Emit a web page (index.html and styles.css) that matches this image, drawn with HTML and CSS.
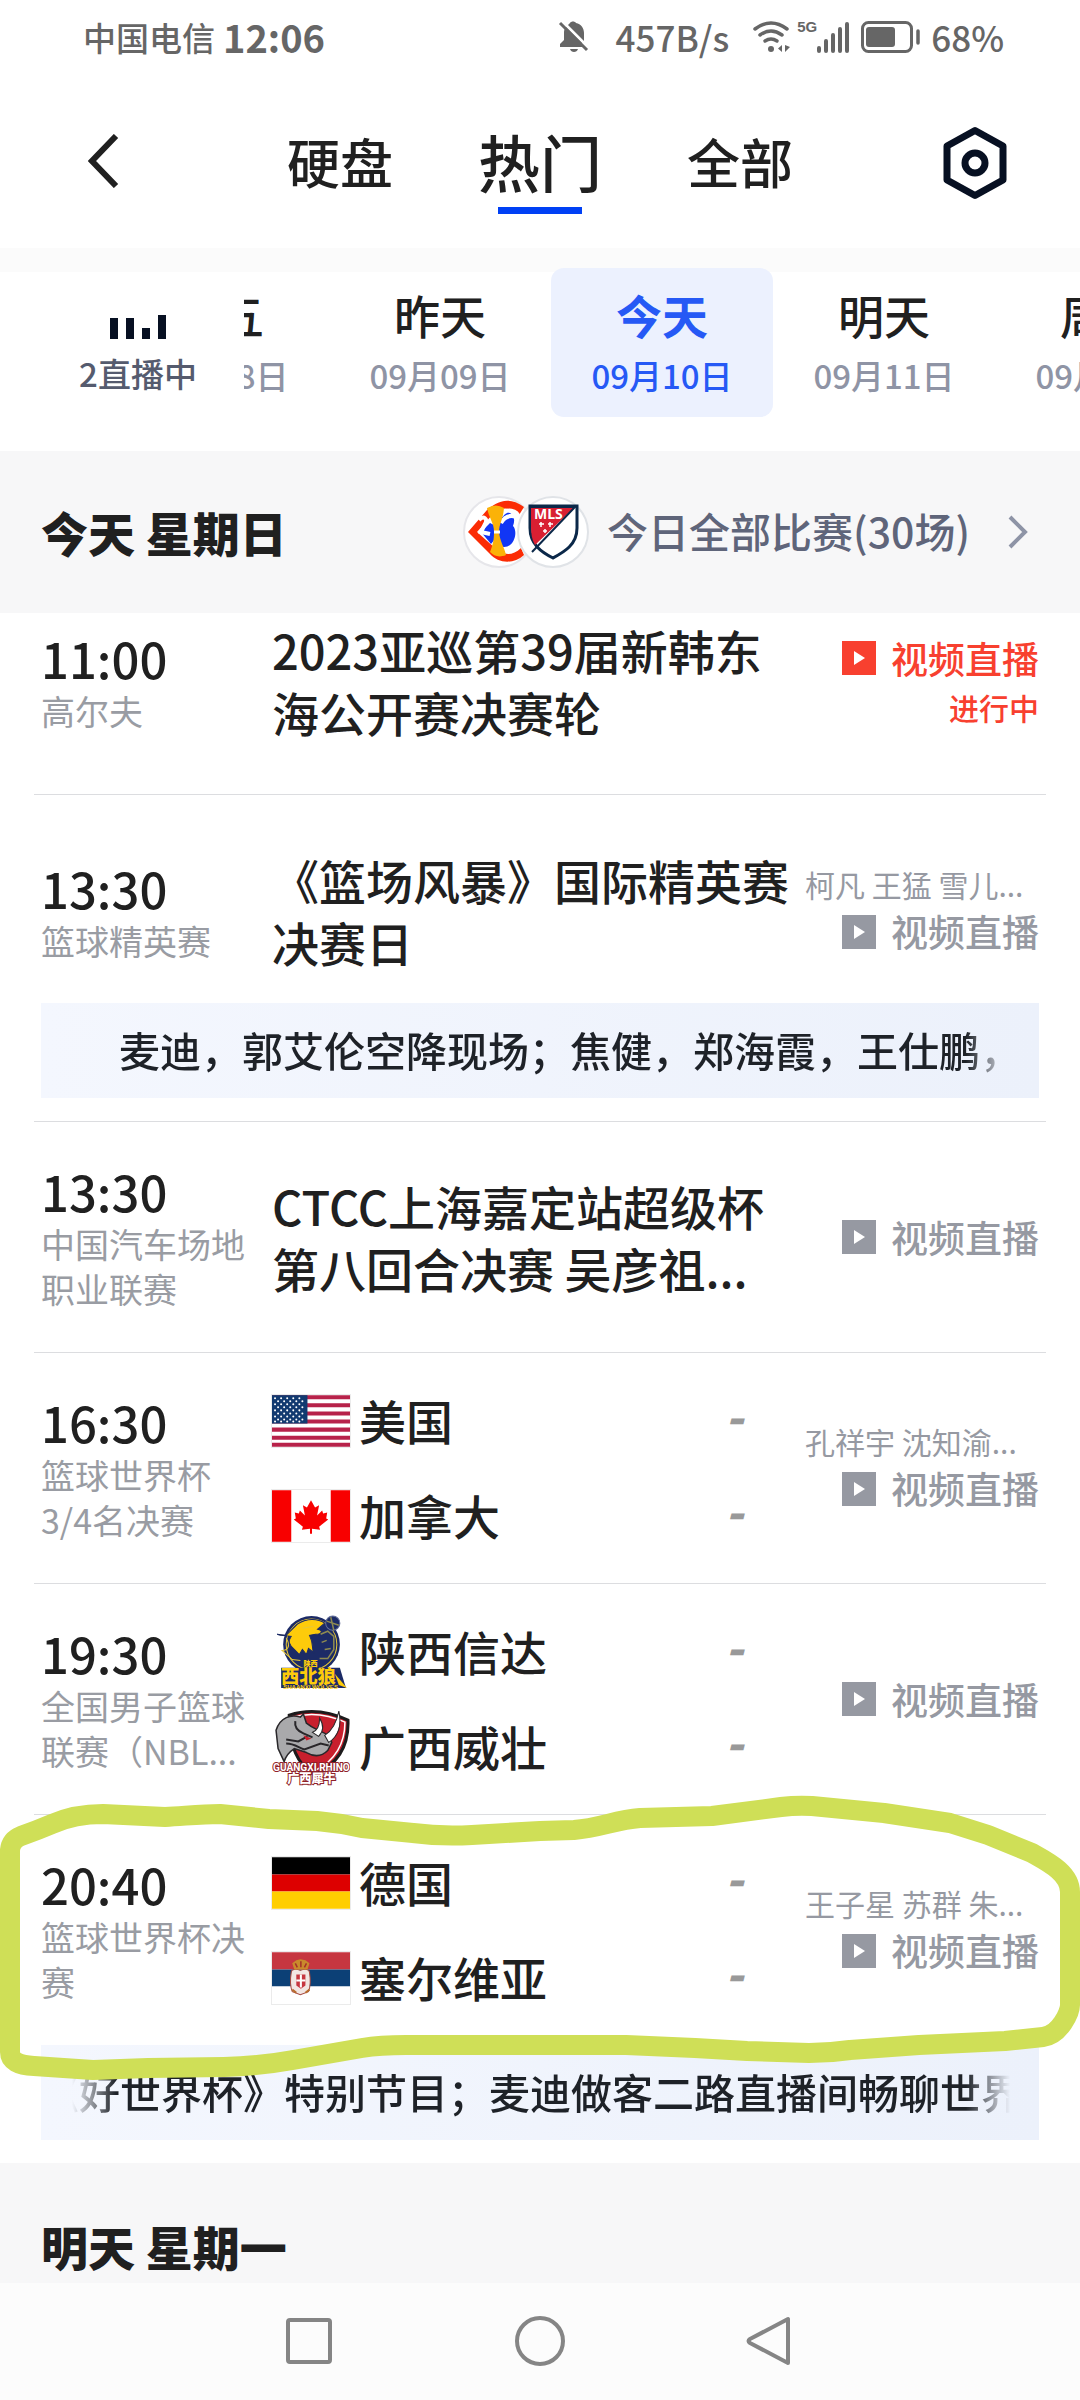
FILE: index.html
```html
<!DOCTYPE html>
<html lang="zh-CN">
<head>
<meta charset="utf-8">
<meta name="viewport" content="width=device-width, initial-scale=1">
<title>热门赛程</title>
<link rel="stylesheet" href="styles.css">
</head>
<body>
<svg class="defs" aria-hidden="true">
  <symbol id="play" viewBox="0 0 34 34"><path d="M0 0h34v34H0z" fill="currentColor"/><path d="M12 10v14l11-7z" fill="#fff"/></symbol>
</svg>

<div class="status">
  <div class="status-left"><span class="carrier">中国电信</span><span class="clock">12:06</span></div>
  <div class="status-right">
    <svg class="bell" width="32" height="34" viewBox="0 0 32 34"><path d="M2 27v-3l4-4v-8c0-2 1-4 2-5L24 23v4zM10 5l2-2c1-2 5-2 6 0 5 1 8 5 8 10v8zM12 29h8c-1 4-7 4-8 0z" fill="#666"/><path d="M2 3l27 27" stroke="#666" stroke-width="3"/></svg>
    <span class="speed">457B/s</span>
    <svg class="wifi" width="38" height="32" viewBox="0 0 38 32"><g fill="none" stroke="#666" stroke-width="3.5" stroke-linecap="round"><path d="M2 8q16-12 32 0"/><path d="M7 14q11-8 22 0"/><path d="M12 20q6-4 12 0"/></g><circle cx="18" cy="28" r="3" fill="#666"/><path d="M29 24v7l-4-3.500zM32 24v7l5-5z" fill="#666"/></svg>
    <span class="net">5G</span>
    <svg width="32" height="32" viewBox="0 0 32 32"><path d="M2 27v3M9 20v10M16 14v16M23 8v22M30 3v27" stroke="#666" stroke-width="4" stroke-linecap="round"/></svg>
    <svg class="battery" width="60" height="32" viewBox="0 0 60 32"><rect x="1.500" y="1.500" width="49" height="29" rx="6" fill="none" stroke="#666" stroke-width="3"/><rect x="5" y="6" width="29" height="20" rx="3" fill="#666"/><path d="M57 10v12" stroke="#666" stroke-width="3.500" stroke-linecap="round"/></svg>
    <span class="percent">68%</span>
  </div>
</div>

<header class="topbar">
  <button class="icon-btn back" aria-label="返回"><svg width="32" height="54" viewBox="0 0 32 54"><path d="M28 2L4 27l24 25" fill="none" stroke="#202020" stroke-width="6"/></svg></button>
  <nav class="tabs">
    <a href="#" class="tab">硬盘</a>
    <a href="#" class="tab active">热门</a>
    <a href="#" class="tab">全部</a>
  </nav>
  <button class="icon-btn settings" aria-label="设置"><svg width="66" height="74" viewBox="0 0 66 74"><path d="M33 4.500L61 20v34L33 69.500 5 54V20z" fill="none" stroke="#071022" stroke-width="7" stroke-linejoin="round"/><circle cx="33" cy="37" r="10" fill="none" stroke="#071022" stroke-width="7"/></svg></button>
</header>

<div class="datebar">
  <button class="live-count">
    <svg width="56" height="24" viewBox="0 0 56 24"><path d="M0 3h8v21H0zM16 3h8v21h-8zM32 13h8v11h-8zM48 0h8v24h-8z" fill="#071022"/></svg>
    <span>2直播中</span>
  </button>
  <div class="dates">
    <button class="date"><span class="day">周五</span><span class="md">09月08日</span></button>
    <button class="date"><span class="day">昨天</span><span class="md">09月09日</span></button>
    <button class="date selected"><span class="day">今天</span><span class="md">09月10日</span></button>
    <button class="date"><span class="day">明天</span><span class="md">09月11日</span></button>
    <button class="date"><span class="day">周二</span><span class="md">09月12日</span></button>
  </div>
</div>

<div class="section-head">
  <h2>今天 星期日</h2>
  <a href="#" class="all-games">
    <span class="leagues">
      <svg class="league" width="72" height="72" viewBox="0 0 72 72">
        <circle cx="36" cy="36" r="35" fill="#fff" stroke="#e6e6ea" stroke-width="2"/>
        <path d="M61 11C44-2 31 8 24 14L5 36l22 22c8 9 23 11 34 1l-3-7c-9 9-19 7-26 0L14 36l15-17c9-9 20-8 27 0z" fill="#fb2c05"/>
        <path d="M18 36l9-9 6 3 3-2 1-11c10-4 17 3 13 13 5 5 2 21-9 21-4 0-7-3-9-8l-4 5z" fill="#1136f5"/>
        <path d="M16 24c5-5 9-1 6 4l-4 8 9 2M38 20c5-9 17-6 18 2-8-4-14-2-18 5" fill="none" stroke="#fff" stroke-width="4"/>
        <path d="M24 12q9-5 17 0c-1 12-5 16-5 24 1 10 5 14 7 23-7 3-12 1-16-3 3-8 4-12 4-20 0-9-5-14-7-24z" fill="#fbb208"/><path d="M31 36h6" stroke="#fff" stroke-width="3"/>
      </svg>
      <svg class="league" width="72" height="72" viewBox="0 0 72 72">
        <circle cx="36" cy="36" r="35" fill="#fff" stroke="#e0e3e7" stroke-width="2"/>
        <path d="M13 10h47v22c0 17-13 24-24 30C24 56 13 48 13 32z" fill="#fff" stroke="#0b2849" stroke-width="3"/>
        <path d="M14 11h44L18 49c-3-5-4-11-4-18z" fill="#d91f32"/><path d="M14 11h44L15 56" fill="none" stroke="#0b2849" stroke-width="2"/>
        <path d="M24 26v5M22 28h5M33 26v5M31 28h5M28 33v4M26 35h4" stroke="#fff" stroke-width="1.500"/>
        <text x="17" y="23" class="mls">MLS</text>
      </svg>
    </span>
    <span class="all-label">今日全部比赛(30场)</span>
    <svg class="chev" width="20" height="34" viewBox="0 0 20 34"><path d="M2 2l15 15L2 32" fill="none" stroke="#8e94a6" stroke-width="4"/></svg>
  </a>
</div>

<main class="games">
  <article class="game partial">
    <div class="row">
      <div class="when"><time>11:00</time><p>高尔夫</p></div>
      <h3>2023亚巡第39届新韩东<br>海公开赛决赛轮</h3>
      <div class="watch"><a href="#" class="video live"><svg><use href="#play"/></svg>视频直播</a><p class="state">进行中</p></div>
    </div>
  </article>

  <article class="game with-note">
    <div class="row">
      <div class="when"><time>13:30</time><p>篮球精英赛</p></div>
      <h3>《篮场风暴》国际精英赛<br>决赛日</h3>
      <div class="watch hosted"><p class="hosts">柯凡 王猛 雪儿...</p><a href="#" class="video"><svg><use href="#play"/></svg>视频直播</a></div>
    </div>
    <div class="note"><p class="ticker"><span class="lead">麦迪，郭艾伦空降现场；焦健，郑海霞，王仕鹏，</span></p></div>
  </article>

  <article class="game">
    <div class="row">
      <div class="when"><time>13:30</time><p>中国汽车场地<br>职业联赛</p></div>
      <h3>CTCC上海嘉定站超级杯<br>第八回合决赛 吴彦祖...</h3>
      <div class="watch"><a href="#" class="video"><svg><use href="#play"/></svg>视频直播</a></div>
    </div>
  </article>

  <article class="game">
    <div class="row">
      <div class="when"><time>16:30</time><p>篮球世界杯<br>3/4名决赛</p></div>
      <div class="teams">
        <div class="team">
          <svg class="flag" viewBox="0 0 77 51"><rect width="77" height="51" fill="#fff"/><path d="M0 2h77M0 10h77M0 18h77M0 26h77M0 34h77M0 42h77M0 49h77" stroke="#b7224a" stroke-width="4"/><rect width="35" height="28" fill="#123a70"/><g stroke="#fff" stroke-width="2" stroke-linecap="round" stroke-dasharray="0 6"><path d="M3 3h30M3 9h30M3 15h30M3 21h30M3 26h30"/><path d="M6 6h26M6 12h26M6 18h26M6 24h26"/></g></svg>
          <span class="name">美国</span><span class="score">-</span>
        </div>
        <div class="team">
          <svg class="flag" viewBox="0 0 77 51"><rect width="77" height="51" fill="#fff"/><path d="M0 0h19v51H0zM58 0h19v51H58z" fill="#f80000"/><path d="M38.500 10l4 7 4-2-2 10 5-5 1 3 4-1-1 6 2 1-9 7 1 3-8-1v5h-2v-5l-8 1 1-3-9-7 2-1-1-6 4 1 1-3 5 5-2-10 4 2z" fill="#f80000"/></svg>
          <span class="name">加拿大</span><span class="score">-</span>
        </div>
      </div>
      <div class="watch hosted"><p class="hosts">孔祥宇 沈知渝...</p><a href="#" class="video"><svg><use href="#play"/></svg>视频直播</a></div>
    </div>
  </article>

  <article class="game">
    <div class="row">
      <div class="when"><time>19:30</time><p>全国男子篮球<br>联赛（NBL...</p></div>
      <div class="teams">
        <div class="team">
          <svg class="crest" viewBox="0 0 77 77">
            <circle cx="39" cy="31" r="28" fill="#1c2b66"/><circle cx="39" cy="31" r="25" fill="none" stroke="#e5c73a" stroke-width="1"/>
            <path d="M5 21l9 1 11-11c9-6 20-6 27-1l-7 6c6 1 4 5-2 5l-6 1c4 8 2 11 4 17l-5-4-2 6-4-5-3 5-5-5c-5-4-6-9-3-13l-11-1z" fill="#fdcb0b" stroke="#1c2b66" stroke-width="1"/>
            <path d="M30 15l11-2M14 25c5 8 1 12-4 12l10 9 8 1" fill="none" stroke="#e5c73a" stroke-width="1"/>
            <circle cx="60" cy="10" r="7" fill="#1c2b66" stroke="#65709a" stroke-width="1"/><path d="M54 8l12 4M58 4l3 13M48 21l7-3 6 5v13l-6 9h-8M49 29l5-2M52 36l6-1" fill="none" stroke="#8d8a51" stroke-width="1.500"/>
            <path d="M9 54h58l6 20H9z" fill="#1c2b66"/>
            <text x="31" y="52" class="crest-top">陕西</text><text x="9" y="69" class="crest-main">西北狼</text><text x="11" y="75" class="crest-sub">SHAANXI WOLVES</text>
            <path d="M62 60l12 14-8-3z" fill="#fdcb0b"/>
          </svg>
          <span class="name">陕西信达</span><span class="score">-</span>
        </div>
        <div class="team">
          <svg class="crest" viewBox="0 0 77 77">
            <path d="M17 7q28-9 58 5c1 25-9 43-33 54-17-10-25-28-25-59z" fill="#c81f2d" stroke="#1d1b1c" stroke-width="3"/><path d="M20 9q26-7 52 5c0 20-9 38-30 48" fill="none" stroke="#fff" stroke-width="1.500"/>
            <path d="M4 22C8 9 19 6 28 9l3-3 3 9c7 6 11 6 22 12l3 7-4 8c-7 7-14 6-21 2l-12-4c-6 4-9 9-10 13L6 40z" fill="#a9a9ab" stroke="#29272a" stroke-width="1.500"/>
            <path d="M40 24c5-2 7-8 7-14 5 8 3 14-1 18zM52 27c8-5 12-14 14-24 3 14-1 25-10 31z" fill="#fff" stroke="#29272a" stroke-width="1"/>
            <path d="M23 13c-1 6 3 10 8 12l9 4M14 31l12 2 9-5M14 35c8 0 12 4 18 6l16-6 8 2" fill="none" stroke="#29272a" stroke-width="2"/><path d="M31 27l8 3-5 2z" fill="#c81f2d"/>
            <text x="1" y="62" class="rhino-main">GUANGXI RHINO</text><text x="15" y="74" class="rhino-sub">广西犀牛</text>
          </svg>
          <span class="name">广西威壮</span><span class="score">-</span>
        </div>
      </div>
      <div class="watch"><a href="#" class="video"><svg><use href="#play"/></svg>视频直播</a></div>
    </div>
  </article>

  <article class="game marked">
    <div class="row">
      <div class="when"><time>20:40</time><p>篮球世界杯决<br>赛</p></div>
      <div class="teams">
        <div class="team">
          <svg class="flag" viewBox="0 0 77 51"><path d="M0 0h77v17H0z"/><path d="M0 17h77v17H0z" fill="#d00"/><path d="M0 34h77v17H0z" fill="#ffce00"/></svg>
          <span class="name">德国</span><span class="score">-</span>
        </div>
        <div class="team">
          <svg class="flag" viewBox="0 0 77 51"><path d="M0 0h77v17H0z" fill="#c63640"/><path d="M0 17h77v17H0z" fill="#0c4076"/><path d="M0 34h77v17H0z" fill="#fff"/><path d="M19 20c0-3 4-4 9-2 5-2 9-1 9 2 1 6 1 14-1 19l-8 3-8-3c-2-5-2-13-1-19z" fill="#f2e6e3" stroke="#a5483f" stroke-width="1"/><path d="M24 22h9v11l-4.500 3-4.500-3z" fill="#c63640"/><path d="M28.500 22v13M24 28h9" stroke="#fff" stroke-width="2"/><path d="M20 37l4 3M37 37l-4 3" stroke="#b86b2d" stroke-width="2"/><path d="M22 17l-2-6 4-3 4-1 5 1 4 3-2 6z" fill="#c98a2c"/><path d="M23 11l2 4M28.500 9v6M34 11l-2 4" stroke="#a53029" stroke-width="1.500"/></svg>
          <span class="name">塞尔维亚</span><span class="score">-</span>
        </div>
      </div>
      <div class="watch hosted"><p class="hosts">王子星 苏群 朱...</p><a href="#" class="video"><svg><use href="#play"/></svg>视频直播</a></div>
    </div>
    <div class="note"><p class="ticker fade-left"><span class="scrolled">《好世界杯》特别节目；麦迪做客二路直播间畅聊世界</span></p></div>
    <svg class="marker" viewBox="0 1790 1080 300" preserveAspectRatio="none" aria-hidden="true"><path d="M10 1850Q11 1840 21 1836Q38 1830 52 1824C70 1816 85 1814 103 1814L165 1817C185 1816 200 1814 220 1814L269 1819L317 1821Q340 1823 362 1828L413 1833C435 1836 455 1836 472 1835L540 1831L574 1830C600 1828 615 1820 640 1818L712 1816L781 1807Q797 1805 812 1806L884 1813L950 1823L988 1835L1032 1853C1048 1862 1070 1873 1070 1892V2005C1070 2012 1060 2035 1043 2037L1005 2041L919 2045L850 2050Q830 2053 809 2053L747 2051L695 2048L626 2045H406Q380 2045 362 2048L293 2060Q260 2066 224 2067L148 2068L93 2070L34 2066Q10 2065 10 2052Z"/></svg>
  </article>
</main>

<div class="section-head next"><h2>明天 星期一</h2></div>

<nav class="sysnav">
  <button class="icon-btn" aria-label="最近任务"><svg width="50" height="50" viewBox="0 0 50 50"><rect x="4" y="4" width="42" height="42" rx="2" fill="none" stroke="#858585" stroke-width="4"/></svg></button>
  <button class="icon-btn" aria-label="主页"><svg width="50" height="50" viewBox="0 0 50 50"><circle cx="25" cy="25" r="23" fill="none" stroke="#858585" stroke-width="4"/></svg></button>
  <button class="icon-btn" aria-label="返回上一页"><svg width="50" height="50" viewBox="0 0 50 50"><path d="M42 3v44L4 27q-3-2 0-4z" fill="none" stroke="#858585" stroke-width="4" stroke-linejoin="round"/></svg></button>
</nav>
</body>
</html>
```
FILE: styles.css
```css
* { box-sizing: border-box; }

body {
  margin: 0;
  min-height: 100vh;
  display: flex;
  flex-direction: column;
  overflow-x: hidden;
  background: #fff;
  color: #202020;
  font-family: "Noto Sans CJK SC", "Noto Sans", sans-serif;
  font-weight: 500;
}

h2, h3, p { margin: 0; }
a { color: inherit; text-decoration: none; }
svg { display: block; flex: none; }
button {
  padding: 0;
  border: 0;
  background: none;
  color: inherit;
  font: inherit;
}
.defs { position: absolute; width: 0; height: 0; }

/* system status bar */
.status {
  display: flex;
  justify-content: space-between;
  height: 74px;
  padding: 0 76px 0 83px;
  color: #666;
  line-height: 74px;
}
.status-left, .status-right { display: flex; align-items: center; }
.carrier { font-size: 33px; }
.clock { margin-left: 8px; font-size: 38px; font-weight: 700; }
.speed { margin: 0 24px 0 26px; font-size: 35px; }
.net {
  margin-left: 6px;
  font: 700 15px/20px "Liberation Sans", sans-serif;
  align-self: flex-start;
  padding-top: 17px;
}
.battery { margin: 0 10px 0 12px; }
.percent { font-size: 35px; }

/* top bar */
.topbar {
  display: grid;
  grid-template-columns: 138px 1fr 138px;
  align-items: center;
  height: 174px;
}
.icon-btn { display: flex; }
.back { margin-left: 88px; }
.settings { margin-left: 0; padding-top: 4px; }
.tabs { display: flex; justify-content: center; align-items: center; gap: 85px; height: 100%; }
.tab { position: relative; font-size: 53px; line-height: 80px; }
.tab.active { font-size: 62px; }
.tab.active::after {
  content: "";
  position: absolute;
  left: 50%;
  bottom: -13px;
  width: 84px;
  height: 7px;
  margin-left: -42px;
  background: #0040f5;
}

/* date strip */
.datebar {
  display: flex;
  height: 203px;
  padding-top: 20px;
  background: linear-gradient(#fbfbfb 24px, #fff 24px);
}
.live-count {
  display: flex;
  flex-direction: column;
  align-items: center;
  flex: none;
  gap: 12px;
  width: 244px;
  height: 149px;
  padding: 47px 0 0 32px;
  color: #555b6e;
  font-size: 33px;
  line-height: 44px;
}
.dates { display: flex; flex: 1; overflow: hidden; }
.date {
  display: flex;
  flex-direction: column;
  align-items: center;
  flex: none;
  width: 222px;
  height: 149px;
  padding-top: 14px;
  border-radius: 13px;
}
.date:first-child { margin-left: -137px; }
.day { font-size: 46px; line-height: 64px; }
.md { color: #8f94a5; font-size: 33px; line-height: 58px; }
.selected { background: #ecf1fe; color: #2659f5; }
.selected .day { font-weight: 700; }
.selected .md { color: #2659f5; }

/* section headings */
.section-head {
  display: flex;
  justify-content: space-between;
  align-items: center;
  height: 162px;
  padding: 0 52px 0 41px;
  background: #f7f7f8;
}
.section-head h2 { font-size: 47px; font-weight: 900; line-height: 70px; }
.all-games { display: flex; align-items: center; color: #5f657a; font-size: 41px; line-height: 60px; }
.all-label { padding-bottom: 4px; }
.leagues { display: flex; margin-right: 18px; }
.league + .league { margin-left: -18px; }
.chev { margin-left: 38px; }
.mls { font: 700 14px "Open Sans", sans-serif; fill: #fff; }

/* match list */
.games { padding: 0 34px; }
.game { position: relative; }
.game + .game { border-top: 1px solid #dcdde0; }
.row {
  display: grid;
  grid-template-columns: 231px 1fr 234px;
  align-items: center;
  min-height: 231px;
  padding: 0 7px;
}
.game + .game .row { min-height: 230px; }
.partial .row { min-height: 181px; padding-bottom: 45px; }
.with-note .row { padding-top: 24px; }
.game.with-note .row { min-height: 208px; }

time { display: block; font-size: 49px; line-height: 60px; }
.when p { padding-bottom: 2px; color: #999ca3; font-size: 34px; font-weight: 400; line-height: 45px; }
h3 { font-size: 47px; font-weight: 500; line-height: 62px; white-space: nowrap; }

.teams { display: flex; flex-direction: column; }
.team { display: flex; align-items: center; height: 95px; }
.flag { width: 78px; height: 52px; outline: 1px solid #ebebeb; }
.crest { width: 78px; height: 78px; }
.name { flex: 1; margin-left: 9px; padding-bottom: 2px; font-size: 47px; line-height: 62px; }
.score {
  margin-right: 62px;
  padding-bottom: 12px;
  color: #999;
  font-size: 47px;
  font-style: italic;
  font-weight: 900;
  line-height: 62px;
}

.crest-top { font: 900 7px "Noto Sans CJK SC", sans-serif; fill: #fdcb0b; }
.crest-main { font: 900 18px "Noto Sans CJK SC", sans-serif; fill: #fdcb0b; }
.crest-sub { font: 700 6px "Liberation Sans", sans-serif; fill: #fdcb0b; }
.rhino-main, .rhino-sub {
  font: 700 10px "Roboto", sans-serif;
  fill: #fff;
  stroke: #8f1f29;
  stroke-width: 2px;
  paint-order: stroke;
}
.rhino-sub { font: 900 12px "Noto Sans CJK SC", sans-serif; }

.watch { color: #9699a2; }
.hosted { padding-bottom: 6px; }
.hosts { font-size: 30px; font-weight: 400; line-height: 47px; white-space: nowrap; }
.video {
  display: flex;
  justify-content: flex-end;
  align-items: center;
  gap: 15px;
  font-size: 37px;
  line-height: 47px;
}
.video svg { width: 34px; height: 34px; }
.live, .state { color: #f8402f; }
.partial .watch { padding-top: 4px; }
.state { font-size: 30px; line-height: 50px; text-align: right; }

.note {
  height: 95px;
  margin: 0 7px 23px;
  padding: 0 29px 0 31px;
  background: linear-gradient(90deg, #f4f7fe, #ecf1fb);
}
.ticker {
  overflow: hidden;
  color: #1e2228;
  font-size: 41px;
  line-height: 93px;
  white-space: nowrap;
  mask-image: linear-gradient(270deg, transparent, #000 44px);
}
.ticker.fade-left { mask-image: linear-gradient(90deg, transparent, #000 44px, #000 calc(100% - 44px), transparent); }
.lead { margin-left: 47px; }
.scrolled { margin-left: -34px; }

/* hand-drawn highlight round the final */
.marker {
  position: absolute;
  top: -25px;
  left: -34px;
  width: calc(100% + 68px);
  height: 300px;
  pointer-events: none;
}
.marker path { fill: none; stroke: #cfdf57; stroke-width: 20px; stroke-linejoin: round; }

.next { flex: 1; height: auto; align-items: flex-start; padding-top: 48px; }

/* system navigation */
.sysnav {
  display: flex;
  justify-content: center;
  align-items: center;
  gap: 181px;
  height: 117px;
  padding-bottom: 2px;
  background: #fcfcfc;
}
```
